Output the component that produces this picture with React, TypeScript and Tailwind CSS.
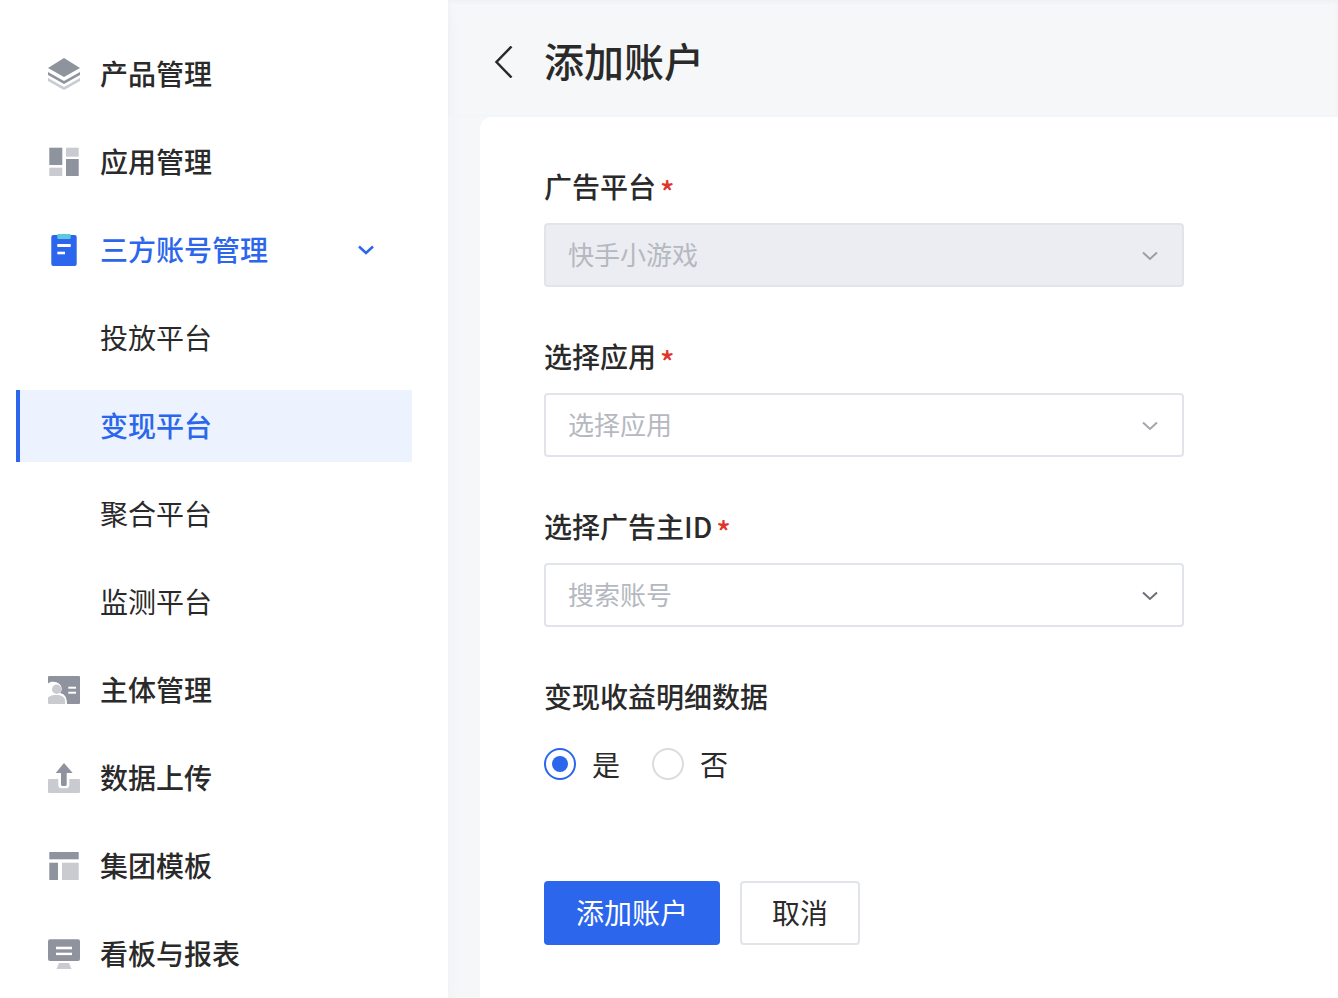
import type { ReactNode } from 'react'

const dark = '#8e939e'
const light = '#c9cbd1'

const LayersIcon = () => (
  <svg viewBox="0 0 32 32" className="size-8">
    <path d="M16 0 32 10 16 19 0 10Z" fill={dark} />
    <path d="M0 14 16 23 32 14V17L16 26 0 17Z" fill={dark} />
    <path d="M0 20 16 29 32 20V23L16 32 0 23Z" fill={light} />
  </svg>
)

const AppIcon = () => (
  <svg viewBox="0 0 32 32" className="size-8">
    <rect x="1.3" y="1.7" width="13" height="17.3" fill={dark} />
    <rect x="18" y="1.7" width="12.7" height="9" fill={light} />
    <rect x="1.3" y="21.7" width="13" height="8.3" fill={light} />
    <rect x="18" y="13" width="12.7" height="17" fill={dark} />
  </svg>
)

const ClipboardIcon = () => (
  <svg viewBox="0 0 32 32" className="size-8">
    <rect x="3.3" y="1" width="25.4" height="31" rx="2" fill="#2b66ec" />
    <rect x="9.3" y="0" width="13.4" height="5" rx="1" fill="#5fc6e0" />
    <rect x="9.3" y="10" width="13.4" height="3" fill="#fff" />
    <rect x="9.3" y="17.7" width="7.7" height="2.6" fill="#fff" />
  </svg>
)

const SubjectIcon = () => (
  <svg viewBox="0 0 32 32" className="size-8">
    <rect x="0" y="2" width="32" height="28" rx="1" fill={dark} />
    <path d="M0 9.5C2 7.500 6 7 9 8.500C14 10.500 15 16 12 19C16 20 19 22 19 30H0Z" fill="#fff" />
    <circle cx="8.700" cy="15.300" r="4.700" fill={light} />
    <path d="M0 23.500C2 21.500 5 21 9 21C14 21 17 23.500 17 27V30H1Q0 30 0 29Z" fill={light} />
    <rect x="20.300" y="12.700" width="7.700" height="2" fill="#fff" />
    <rect x="20.300" y="17.700" width="7.700" height="2" fill="#fff" />
  </svg>
)

const UploadIcon = () => (
  <svg viewBox="0 0 32 32" className="size-8">
    <rect x="0" y="17" width="32" height="14" rx="1" fill={light} />
    <path d="M10.300 17H21.300V23Q21.300 26.300 18 26.300H13.600Q10.300 26.300 10.300 23Z" fill="#fff" />
    <path d="M16 1 24.700 11H18.700V22.500Q18.700 24 17 24H14.700Q13 24 13 22.500V11H7.700Z" fill={dark} />
  </svg>
)

const TemplateIcon = () => (
  <svg viewBox="0 0 32 32" className="size-8">
    <rect x="1.300" y="2" width="29.400" height="7.300" fill={dark} />
    <rect x="1.300" y="12.700" width="8.700" height="17.300" fill={dark} />
    <rect x="14" y="12.700" width="16.700" height="17.300" fill={light} />
  </svg>
)

const BoardIcon = () => (
  <svg viewBox="0 0 32 32" className="size-8">
    <rect x="0" y="1.300" width="32" height="21.700" rx="2" fill={dark} />
    <rect x="8" y="8.700" width="16" height="2.600" fill="#fff" />
    <rect x="8" y="14.700" width="16" height="2.400" fill="#fff" />
    <path d="M11 25H21L23.500 31H8.500Z" fill={light} />
  </svg>
)

const Chevron = ({ color, width = 2 }: { color: string; width?: number }) => (
  <svg viewBox="0 0 16 10" className="w-4 h-2.5" fill="none" stroke={color} strokeWidth={width}>
    <path d="M1 1.500 8 8 15 1.500" />
  </svg>
)

const menu: { label: string; icon?: ReactNode; state?: 'open' | 'active' }[] = [
  { label: '产品管理', icon: <LayersIcon /> },
  { label: '应用管理', icon: <AppIcon /> },
  { label: '三方账号管理', icon: <ClipboardIcon />, state: 'open' },
  { label: '投放平台' },
  { label: '变现平台', state: 'active' },
  { label: '聚合平台' },
  { label: '监测平台' },
  { label: '主体管理', icon: <SubjectIcon /> },
  { label: '数据上传', icon: <UploadIcon /> },
  { label: '集团模板', icon: <TemplateIcon /> },
  { label: '看板与报表', icon: <BoardIcon /> },
]

function Sidebar() {
  return (
    <aside className="w-112 shrink-0 bg-white pt-9.5 pl-4 pr-9 flex flex-col gap-4 shadow-lg shadow-gray-200/60 z-10">
      {menu.map(({ label, icon, state }) => {
        const blue = state === 'open' || state === 'active'
        return (
          <div
            key={label}
            className={`h-18 shrink-0 flex items-center border-l-4 pl-7 pr-9.5 text-[28px] ${
              state === 'active' ? 'border-[#2b66ec] bg-[#ecf3fe]' : 'border-transparent'
            } ${blue ? 'text-[#2b66ec]' : 'text-[#2a2a2a]'} ${icon || blue ? 'font-medium' : ''}`}
          >
            <span className="w-13 shrink-0">{icon}</span>
            <span className="pb-0.5">{label}</span>
            {state === 'open' && (
              <span className="ml-auto flex">
                <Chevron color="#2b66ec" width={2.500} />
              </span>
            )}
          </div>
        )
      })}
    </aside>
  )
}

function Field({ label, required, children }: { label: string; required?: boolean; children: ReactNode }) {
  return (
    <div>
      <div className="h-10 flex items-center text-[28px] font-medium text-[#2a2a2a]">
        <span className="pb-0.5">{label}</span>
        {required && <span className="ml-1 mt-2 text-3xl text-[#e0352b]">*</span>}
      </div>
      {children}
    </div>
  )
}

function Select({ text, disabled, chevron }: { text: string; disabled?: boolean; chevron: string }) {
  return (
    <div
      className={`mt-4 w-160 h-16 border-2 border-[#e1e4ea] rounded flex items-center justify-between pl-5.5 pr-6 text-[26px] text-[#b5b8c0] ${
        disabled ? 'bg-[#ebedf2]' : 'bg-white'
      }`}
    >
      <span className="pb-1">{text}</span>
      <span className="mt-0.5 flex">
        <Chevron color={chevron} />
      </span>
    </div>
  )
}

export default function App() {
  return (
    <div className="h-[998px] flex overflow-hidden bg-[#f6f7f9] font-['Noto_Sans_CJK_SC','Noto_Sans',sans-serif]">
      <Sidebar />
      <main className="flex-1 flex flex-col min-w-0">
        <header className="pl-10 pt-8 pb-7 flex items-center gap-6 shadow-inner shadow-gray-200/40">
          <svg viewBox="0 0 32 32" className="size-8 mt-1" fill="none" stroke="#2a2a2a" strokeWidth={2.500}>
            <path d="M23.500 0.500 8.500 16 23.500 31.500" />
          </svg>
          <h1 className="h-14 flex items-center text-[40px] font-medium text-[#2a2a2a]">添加账户</h1>
        </header>
        <section className="flex-1 mt-px ml-8 bg-white rounded-tl-xl pl-16 pt-12.5 flex flex-col gap-12.5">
          <Field label="广告平台" required>
            <Select text="快手小游戏" disabled chevron="#9b9ea6" />
          </Field>
          <Field label="选择应用" required>
            <Select text="选择应用" chevron="#a3a6ae" />
          </Field>
          <Field label="选择广告主ID" required>
            <Select text="搜索账号" chevron="#6b6f78" />
          </Field>
          <Field label="变现收益明细数据">
            <div className="mt-6.5 flex items-center text-[28px] text-[#2a2a2a]">
              <span className="size-8 rounded-full border-2 border-[#2b66ec] flex items-center justify-center">
                <span className="size-4 rounded-full bg-[#2b66ec]" />
              </span>
              <span className="ml-4">是</span>
              <span className="ml-8 size-8 rounded-full border-2 border-[#dcdcdc]" />
              <span className="ml-4">否</span>
            </div>
            <div className="mt-24 flex gap-5 text-[28px]">
              <button className="w-44 h-16 pb-0.5 rounded bg-[#2b66ec] text-white">添加账户</button>
              <button className="w-30 h-16 pb-0.5 rounded border-2 border-[#e1e4ea] bg-white text-[#2a2a2a]">取消</button>
            </div>
          </Field>
        </section>
      </main>
    </div>
  )
}
